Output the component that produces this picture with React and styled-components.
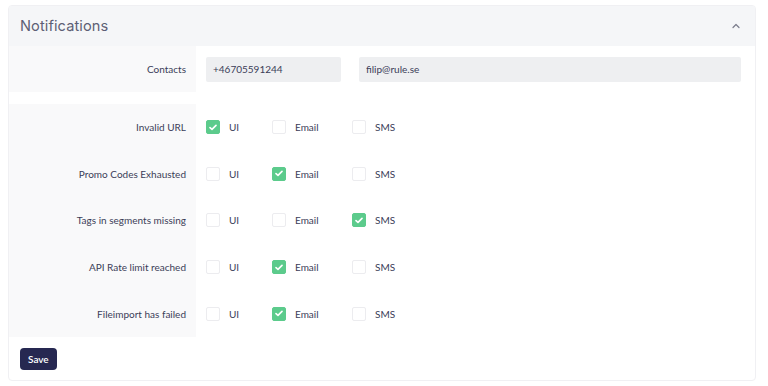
import React, { useState } from 'react';
import styled, { createGlobalStyle } from 'styled-components';

const GlobalStyle = createGlobalStyle`
  body {
    margin: 0;
    background: #ffffff;
    font-family: Lato, "Open Sans", sans-serif;
    color: #3b3d58;
  }
`;

const Page = styled.div`
  padding: 5px 12px 6px 8px;
`;

const Card = styled.section`
  border: 1px solid #f0f0f3;
  border-radius: 4px;
  overflow: hidden;
  background: #fff;
`;

const Header = styled.header`
  height: 40px;
  display: flex;
  align-items: center;
  justify-content: space-between;
  padding: 0 14px 0 11px;
  background: #f5f6f8;
`;

const Title = styled.h2`
  margin: 0;
  font-family: Inter, "Noto Sans", sans-serif;
  font-size: 14.6px;
  font-weight: 400;
  color: #5d5f75;
  letter-spacing: 0.1px;
`;

const Chevron = styled.svg`
  width: 10px;
  height: 10px;
  color: #7a7c8c;
`;

const Section = styled.div`
  display: grid;
  grid-template-columns: 187px 1fr;
  margin-top: ${({ $gap }) => $gap || 0}px;
`;

const LabelCell = styled.div`
  background: #f9f9fa;
  display: flex;
  flex-direction: column;
`;

const Label = styled.div`
  height: ${({ $h }) => $h}px;
  display: flex;
  align-items: center;
  justify-content: flex-end;
  padding-right: 10px;
  font-size: 10px;
  color: #3b3d58;
`;

const Content = styled.div`
  display: flex;
  flex-direction: column;
  padding-left: 10px;
`;

const InputRow = styled.div`
  height: 46px;
  display: flex;
  align-items: center;
  gap: 18px;
  padding-right: 14px;
`;

const Input = styled.input`
  height: 25px;
  box-sizing: border-box;
  border: none;
  border-radius: 2px;
  background: #eeeff1;
  padding: 0 7px;
  font-family: Lato, "Open Sans", sans-serif;
  font-size: 10px;
  color: #3b3d58;
  outline: none;
  width: ${({ $w }) => ($w ? `${$w}px` : 'auto')};
  flex: ${({ $w }) => ($w ? 'none' : 1)};
`;

const OptionRow = styled.div`
  height: ${({ $h }) => $h}px;
  display: grid;
  grid-template-columns: 66px 80px auto;
  align-items: center;
`;

const Option = styled.label`
  display: flex;
  align-items: center;
  gap: 9px;
  font-size: 10px;
  color: #3b3d58;
  cursor: pointer;
`;

const Box = styled.span`
  width: 14px;
  height: 14px;
  box-sizing: border-box;
  border-radius: 2px;
  display: flex;
  align-items: center;
  justify-content: center;
  background: ${({ $on }) => ($on ? '#5ccb8c' : '#ffffff')};
  border: 1px solid ${({ $on }) => ($on ? '#5ccb8c' : '#ececef')};
`;

const Footer = styled.div`
  padding: 10px 11px 10px;
`;

const SaveButton = styled.button`
  height: 22px;
  padding: 0 8px;
  border: none;
  border-radius: 4px;
  background: #262851;
  color: #fff;
  font-family: Lato, "Open Sans", sans-serif;
  font-size: 10px;
  font-weight: 600;
  cursor: pointer;
`;

const ROW_H = 46.6;
const CHANNELS = ['UI', 'Email', 'SMS'];

const initial = [
  { name: 'Invalid URL', on: ['UI'] },
  { name: 'Promo Codes Exhausted', on: ['Email'] },
  { name: 'Tags in segments missing', on: ['SMS'] },
  { name: 'API Rate limit reached', on: ['Email'] },
  { name: 'Fileimport has failed', on: ['Email'] },
];

function Check({ on }) {
  return (
    <Box $on={on}>
      {on && (
        <svg width="8" height="7" viewBox="0 0 8 7" fill="none">
          <path d="M1 3.6 3 5.4 7 1.4" stroke="#fff" strokeWidth="1.6" strokeLinecap="round" strokeLinejoin="round" />
        </svg>
      )}
    </Box>
  );
}

export default function App() {
  const [rows, setRows] = useState(initial);

  const toggle = (i, ch) => {
    setRows((prev) =>
      prev.map((r, j) =>
        j !== i ? r : { ...r, on: r.on.includes(ch) ? r.on.filter((c) => c !== ch) : [...r.on, ch] },
      ),
    );
  };

  return (
    <Page>
      <GlobalStyle />
      <Card>
        <Header>
          <Title>Notifications</Title>
          <Chevron viewBox="0 0 10 10" fill="none">
            <path d="M2 6.5 5 3.5 8 6.5" stroke="currentColor" strokeWidth="1.2" strokeLinecap="round" strokeLinejoin="round" />
          </Chevron>
        </Header>

        <Section>
          <LabelCell>
            <Label $h={46}>Contacts</Label>
          </LabelCell>
          <Content>
            <InputRow>
              <Input $w={135} defaultValue="+46705591244" />
              <Input defaultValue="filip@rule.se" />
            </InputRow>
          </Content>
        </Section>

        <Section $gap={12}>
          <LabelCell>
            {rows.map((r) => (
              <Label key={r.name} $h={ROW_H}>
                {r.name}
              </Label>
            ))}
          </LabelCell>
          <Content>
            {rows.map((r, i) => (
              <OptionRow key={r.name} $h={ROW_H}>
                {CHANNELS.map((ch) => (
                  <Option key={ch} onClick={() => toggle(i, ch)}>
                    <Check on={r.on.includes(ch)} />
                    {ch}
                  </Option>
                ))}
              </OptionRow>
            ))}
          </Content>
        </Section>

        <Footer>
          <SaveButton>Save</SaveButton>
        </Footer>
      </Card>
    </Page>
  );
}
